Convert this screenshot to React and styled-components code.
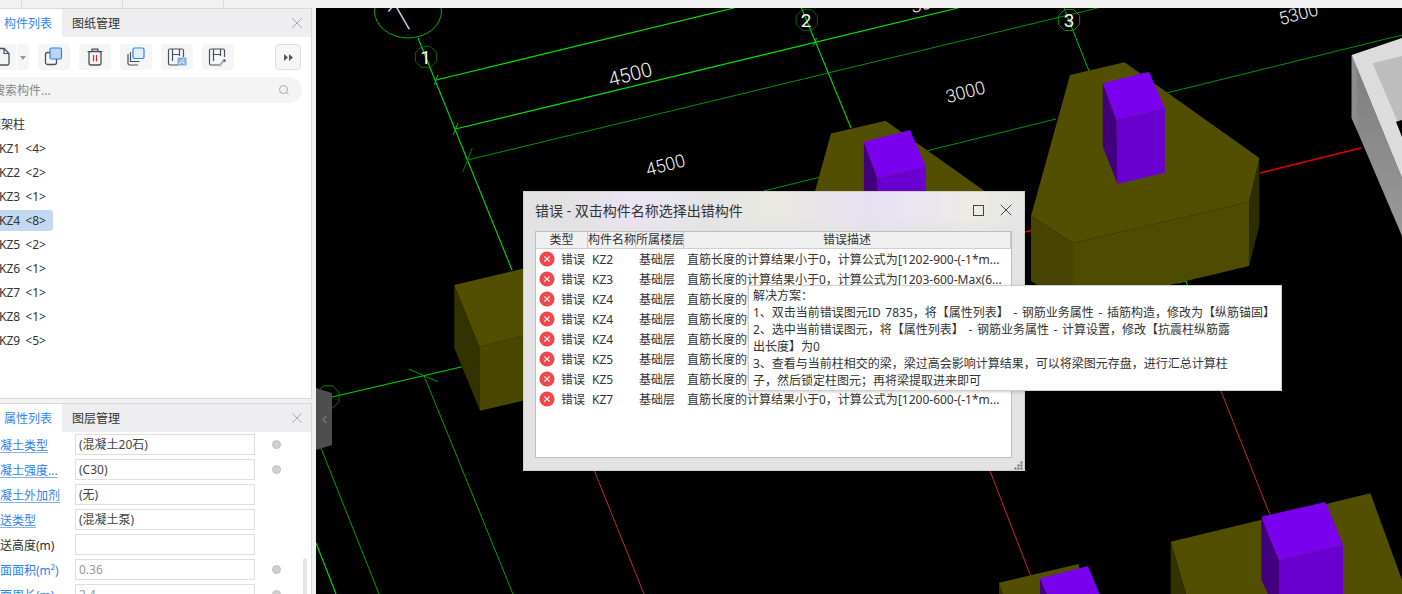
import React from "react";
import styled, { createGlobalStyle } from "styled-components";
import { Search, X, ChevronLeft } from "lucide-react";

const FONT = `"Noto Sans", "Noto Sans CJK SC", "Liberation Sans", sans-serif`;

const members = ["KZ1 <4>", "KZ2 <2>", "KZ3 <1>", "KZ4 <8>", "KZ5 <2>", "KZ6 <1>", "KZ7 <1>", "KZ8 <1>", "KZ9 <5>"];

const props = [
  { label: "凝土类型", value: "(混凝土20石)", blue: true, link: true, dot: true },
  { label: "凝土强度...", value: "(C30)", blue: true, link: true, dot: true },
  { label: "凝土外加剂", value: "(无)", blue: true, link: true },
  { label: "送类型", value: "(混凝土泵)", blue: true, link: true },
  { label: "送高度(m)", value: "" },
  { label: "面面积(m²)", value: "0.36", blue: true, muted: true, dot: true },
  { label: "面周长(m)", value: "2.4", blue: true, muted: true, dot: true },
];

const errors = [
  { name: "KZ2", formula: "[1202-900-(-1*m..." },
  { name: "KZ3", formula: "[1203-600-Max(6..." },
  { name: "KZ4", formula: "[1200-600-(-1*m..." },
  { name: "KZ4", formula: "[1200-600-(-1*m..." },
  { name: "KZ4", formula: "[1200-600-(-1*m..." },
  { name: "KZ5", formula: "[1200-600-(-1*m..." },
  { name: "KZ5", formula: "[1200-600-(-1*m..." },
  { name: "KZ7", formula: "[1200-600-(-1*m..." },
];

const tipLines = [
  "解决方案：",
  "1、双击当前错误图元ID 7835，将【属性列表】 - 钢筋业务属性 - 插筋构造，修改为【纵筋锚固】",
  "2、选中当前错误图元，将【属性列表】 - 钢筋业务属性 - 计算设置，修改【抗震柱纵筋露",
  "出长度】为0",
  "3、查看与当前柱相交的梁，梁过高会影响计算结果，可以将梁图元存盘，进行汇总计算柱",
  "子，然后锁定柱图元；再将梁提取进来即可",
];

const GlobalStyle = createGlobalStyle`
  html, body {
    margin: 0;
    padding: 0;
    overflow: hidden;
    background: #f0f0f0;
    font-family: ${FONT};
  }
`;

function IconDuplicate() {
  return (
    <svg width="20" height="20" viewBox="0 0 20 20" fill="none">
      <rect x="1.5" y="5.5" width="11" height="12" rx="2" stroke="#46505e" strokeWidth="1.3" />
      <rect x="6" y="1" width="11.5" height="11" rx="1.5" fill="#bcd4f4" stroke="#2f84ee" strokeWidth="1.2" />
    </svg>
  );
}

function IconTrash() {
  return (
    <svg width="20" height="20" viewBox="0 0 20 20" fill="none">
      <path d="M2.5 4.5h15M7 4.5V2.2h6v2.3" stroke="#46505e" strokeWidth="1.2" />
      <rect x="4" y="4.5" width="12" height="13.5" rx="2" stroke="#46505e" strokeWidth="1.3" />
      <path d="M8.5 8v6.5M11.5 8v6.5" stroke="#e8262a" strokeWidth="1.2" />
    </svg>
  );
}

function IconStack() {
  return (
    <svg width="20" height="20" viewBox="0 0 20 20" fill="none">
      <path d="M2 7v9.5a1.5 1.5 0 0 0 1.5 1.5H12" stroke="#46505e" strokeWidth="1.2" />
      <path d="M4.5 5v9.5h9" stroke="#46505e" strokeWidth="1.2" />
      <rect x="7" y="1" width="11" height="10.5" rx="1.5" fill="#e3eefb" stroke="#2f84ee" strokeWidth="1.2" />
    </svg>
  );
}

function IconPlan({ variant }) {
  return (
    <svg width="20" height="20" viewBox="0 0 20 20" fill="none">
      <path d="M11 18H3a1.5 1.5 0 0 1-1.5-1.5v-13A1.5 1.5 0 0 1 3 2h12a1.5 1.5 0 0 1 1.5 1.5V10" stroke="#46505e" strokeWidth="1.2" />
      <path d="M5.5 2v12M12.5 2v7M5.5 7.5h7" stroke="#46505e" strokeWidth="1.2" />
      {variant === "image" ? (
        <g>
          <rect x="11" y="11" width="8" height="7" fill="#8db8ee" stroke="#5f9ce6" strokeWidth="0.8" />
          <path d="M12 17l2.6-2.6L17.6 17" stroke="#ffffff" strokeWidth="1" />
          <circle cx="16.5" cy="13" r="0.8" fill="#ffffff" />
        </g>
      ) : (
        <g>
          <path d="M11 19l5-5.5" stroke="#a9afb8" strokeWidth="2" />
          <path d="M15.5 12.5l2 2" stroke="#5f6670" strokeWidth="2" />
        </g>
      )}
    </svg>
  );
}

function IconPage() {
  return (
    <svg width="20" height="20" viewBox="0 0 20 20" fill="none">
      <path d="M4 1.5h8l5 5V16.5a1.5 1.5 0 0 1-1.5 1.5h-11A1.5 1.5 0 0 1 3 16.5V3a1.5 1.5 0 0 1 1-1.5z" stroke="#46505e" strokeWidth="1.3" />
      <path d="M12 1.5v5h5" stroke="#46505e" strokeWidth="1.2" />
    </svg>
  );
}

function ErrorIcon() {
  return (
    <svg width="16" height="16" viewBox="0 0 16 16">
      <circle cx="8" cy="8" r="7.6" fill="#f1474a" />
      <path d="M5.3 5.3l5.4 5.4M10.7 5.3l-5.4 5.4" stroke="#ffffff" strokeWidth="1.2" fill="none" />
    </svg>
  );
}

// 轴号的八边形圈
function hexPoints(cx, cy, r) {
  const pts = [];
  for (let i = 0; i < 8; i++) {
    const a = (Math.PI / 4) * i + Math.PI / 8;
    pts.push(`${(cx + r * Math.cos(a)).toFixed(1)},${(cy + r * Math.sin(a)).toFixed(1)}`);
  }
  return pts.join(" ");
}

const OLIVE = { top: "#525000", front: "#4e4c00", left: "#464400", right: "#2e2d00" };
const PURPLE = { top: "#7a00ee", front: "#6a00d0", left: "#42007f" };

function Footing({ dx = 0, dy = 0 }) {
  return (
    <g transform={`translate(${dx} ${dy})`}>
      <polygon points="1031,216 1073,243 1073,308 1031,281" fill={OLIVE.left} />
      <polygon points="1073,243 1249,202 1249,266 1073,308" fill={OLIVE.front} />
      <polygon points="1259.4,158 1249,202 1249,266 1259.4,226" fill={OLIVE.right} />
      <polygon points="1070,75 1124.5,62.3 1259.4,158 1249,202 1073,243 1031,216" fill={OLIVE.top} />
      <polygon points="1102.8,83.3 1116.5,120 1117.6,184 1102.8,146.7" fill={PURPLE.left} />
      <polygon points="1116.5,120 1164.8,108.3 1164.8,172.7 1117.6,184" fill={PURPLE.front} />
      <polygon points="1102.8,83.3 1149,71.7 1164.8,108.3 1116.5,120" fill={PURPLE.top} />
    </g>
  );
}

function Tick({ x, y, len = 8, stroke }) {
  return <line x1={x - len * 0.4} y1={y + len} x2={x + len * 0.4} y2={y - len} stroke={stroke} strokeWidth="0.9" />;
}

function Drawing() {
  return (
    <DrawingSvg viewBox="316 8 1086 586">
      <g fill="none" strokeWidth="1">
        <line x1="436" y1="80" x2="734" y2="8" stroke="#00e800" strokeWidth="1.2" />
        <line x1="455.5" y1="129" x2="958" y2="8" stroke="#00e800" strokeWidth="1.2" />
        <line x1="467.5" y1="160" x2="1097.6" y2="8" stroke="#009400" />
        <line x1="763.7" y1="191" x2="1056" y2="119" stroke="#009400" />
        <line x1="1166.5" y1="93" x2="1402" y2="35" stroke="#009400" />
        <line x1="418" y1="38" x2="512" y2="270" stroke="#00d800" strokeWidth="1.15" />
        <line x1="801.5" y1="8" x2="851" y2="128" stroke="#00d800" strokeWidth="1.15" />
        <line x1="1064" y1="8" x2="1089" y2="71" stroke="#00c000" />
        <line x1="332" y1="397" x2="462" y2="366.7" stroke="#00d000" strokeWidth="1.15" />
        <line x1="423.7" y1="375" x2="513" y2="594" stroke="#00a000" />
        <line x1="321" y1="448" x2="379" y2="594" stroke="#00a000" />
        <line x1="316" y1="543" x2="336" y2="594" stroke="#00e000" strokeWidth="1.15" />
        <line x1="1177" y1="283" x2="1186" y2="281" stroke="#00d000" />
        <line x1="1186" y1="281" x2="1189" y2="290" stroke="#00d000" />
        <line x1="408.7" y1="369" x2="437.7" y2="381.7" stroke="#00a000" />
        <line x1="1260" y1="173" x2="1361" y2="148" stroke="#e80000" strokeWidth="1.3" />
        <line x1="1025" y1="232" x2="1034" y2="230" stroke="#e80000" strokeWidth="1.3" />
        <line x1="594" y1="470" x2="644" y2="594" stroke="#d83030" strokeWidth="0.9" />
        <line x1="989.6" y1="470" x2="1030.7" y2="576" stroke="#d83030" strokeWidth="0.9" />
        <line x1="1221" y1="391" x2="1270" y2="515" stroke="#d83030" strokeWidth="0.9" />
      </g>

      <Tick x={436} y={80} len={5} stroke="#00d000" />
      <Tick x={455.5} y={129} len={6} stroke="#00d000" />
      <Tick x={467.5} y={160} len={12} stroke="#008c00" />
      <Tick x={815} y={42} len={4} stroke="#00d000" />

      <ellipse cx="408" cy="11" rx="33.5" ry="27" fill="none" stroke="#00b000" strokeWidth="1" />
      <polygon points={hexPoints(426, 57, 11.5)} fill="none" stroke="#007000" strokeWidth="0.9" />
      <polygon points={hexPoints(806.7, 20, 11.5)} fill="none" stroke="#007000" strokeWidth="0.9" />
      <polygon points={hexPoints(1069, 20, 11.5)} fill="none" stroke="#008c00" strokeWidth="1" />
      <polygon points={hexPoints(328, 397, 12)} fill="none" stroke="#009000" strokeWidth="0.9" />

      <CadText x="408" y="30" size={42} weight={100} transform="rotate(-30 408 30)">1</CadText>
      <CadText x="425.5" y="64" size={19}>1</CadText>
      <CadText x="806" y="27" size={19}>2</CadText>
      <CadText x="1069" y="27" size={19}>3</CadText>
      <CadText x="632" y="81" size={20} weight={300} transform="rotate(-15 632 81)">4500</CadText>
      <CadText x="667" y="171" size={18} weight={300} transform="rotate(-15 667 171)">4500</CadText>
      <CadText x="967" y="98" size={18} weight={300} transform="rotate(-15 967 98)">3000</CadText>
      <CadText x="1300" y="20" size={18} weight={300} transform="rotate(-15 1300 20)">5300</CadText>
      <CadText x="932" y="8" size={18} weight={300} transform="rotate(-15 932 8)">3000</CadText>

      <Footing />
      <Footing dx={-239} dy={58.4} />

      {/* 左侧基础 */}
      <polygon points="454.3,285 479.3,346.7 480,410.7 454.3,348" fill="#333300" />
      <polygon points="479.3,346.7 530,334 530,399 480,410.7" fill="#4a4800" />
      <polygon points="454.3,285 530,267 530,334 479.3,346.7" fill="#525000" />

      {/* 下方基础 */}
      <polygon points="999,582.7 1078.5,564 1086,594 1003,594 999,594" fill="#525000" />
      <polygon points="999,582.7 1003,594 999,594" fill="#333300" />
      <polygon points="1040,578.3 1047,594 1040,594" fill={PURPLE.left} />
      <polygon points="1040,578.3 1088,566 1099,592.7 1099,594 1047,594" fill={PURPLE.top} />

      <polygon points="1170.7,541.7 1370.4,493.3 1402,580 1402,594 1186,594" fill="#525000" />
      <polygon points="1170.7,541.7 1186,594 1170.7,594" fill="#333300" />
      <polygon points="1261.3,516.7 1279,560 1279,594 1268,594 1261.3,580" fill={PURPLE.left} />
      <polygon points="1279,560 1343,545 1343,594 1279,594" fill={PURPLE.front} />
      <polygon points="1261.3,516.7 1325.4,502 1343,545 1279,560" fill={PURPLE.top} />

      {/* 灰色构件 */}
      <defs>
        <linearGradient id="sideGrey" x1="0" y1="0" x2="0" y2="1">
          <stop offset="0" stopColor="#7c7c7c" />
          <stop offset="1" stopColor="#9a9a9a" />
        </linearGradient>
      </defs>
      <polygon points="1351.7,55 1402,178 1402,236 1351.7,118" fill="url(#sideGrey)" />
      <polygon points="1351.7,55 1357,68 1357,130 1351.7,118" fill="#8c8c8c" />
      <polygon points="1351.7,55 1402,38 1402,178" fill="#dcdcdc" />
      <polygon points="1372.7,63.3 1402,56 1402,132" fill="#bdbdbd" />
      <polygon points="1396,121.7 1402,120 1402,137" fill="#000000" />
    </DrawingSvg>
  );
}

export default function App() {
  return (
    <Page>
      <GlobalStyle />
      <TopStrip>
        <StripCell />
        <StripCell />
        <StripCell />
      </TopStrip>
      <Main>
        <Side>
          <ListPanel>
            <Tabs>
              <Tab $active>构件列表</Tab>
              <Tab>图纸管理</Tab>
              <CloseBtn><X size={18} strokeWidth={1.3} /></CloseBtn>
            </Tabs>
            <Toolbar>
              <SplitBtn>
                <SplitMain><IconPage /></SplitMain>
                <SplitArrow />
              </SplitBtn>
              <ToolBtn><IconDuplicate /></ToolBtn>
              <ToolBtn><IconTrash /></ToolBtn>
              <ToolBtn><IconStack /></ToolBtn>
              <ToolBtn><IconPlan variant="image" /></ToolBtn>
              <ToolBtn><IconPlan variant="picker" /></ToolBtn>
              <MoreBtn>
                <svg width="9" height="7" viewBox="0 0 9 7">
                  <path d="M0 0l4 3.5L0 7zM5 0l4 3.5L5 7z" fill="#555b66" />
                </svg>
              </MoreBtn>
            </Toolbar>
            <SearchBar>
              <SearchText>搜索构件...</SearchText>
              <Search size={12} color="#a8a8a8" strokeWidth={2} />
            </SearchBar>
            <Tree>
              <TreeGroup>框架柱</TreeGroup>
              {members.map((m) => (
                <TreeRow key={m} $selected={m.startsWith("KZ4")}>{m}</TreeRow>
              ))}
            </Tree>
          </ListPanel>
          <PropPanel>
            <Tabs>
              <Tab $active>属性列表</Tab>
              <Tab>图层管理</Tab>
              <CloseBtn><X size={18} strokeWidth={1.3} /></CloseBtn>
            </Tabs>
            <PropList>
              {props.map((p) => (
                <PropRow key={p.label}>
                  <PropLabel $blue={p.blue} $link={p.link}>{p.label}</PropLabel>
                  <PropValue $muted={p.muted}>{p.value}</PropValue>
                  {p.dot && <PropDot />}
                </PropRow>
              ))}
            </PropList>
            <PropScroll />
          </PropPanel>
        </Side>
        <Canvas>
          <Drawing />
          <Collapse><ChevronLeft size={13} color="#a5a5a5" strokeWidth={1.5} /></Collapse>
          <Dialog>
            <DialogTitle>
              <span>错误 - 双击构件名称选择出错构件</span>
              <TitleBtns>
                <MaxBox />
                <X size={20} color="#444" strokeWidth={1.2} />
              </TitleBtns>
            </DialogTitle>
            <Table>
              <HeadRow>
                <HeadCell>类型</HeadCell>
                <HeadCell>构件名称</HeadCell>
                <HeadCell>所属楼层</HeadCell>
                <HeadCell>错误描述</HeadCell>
              </HeadRow>
              {errors.map((e, i) => (
                <ErrorRow key={i}>
                  <TypeCell><ErrorIcon /><span>错误</span></TypeCell>
                  <NameCell>{e.name}</NameCell>
                  <FloorCell>基础层</FloorCell>
                  <DescCell>直筋长度的计算结果小于0，计算公式为{e.formula}</DescCell>
                </ErrorRow>
              ))}
            </Table>
            <Grip>
              <svg width="9" height="9" viewBox="0 0 9 9" fill="#6d6d6d">
                <rect x="6.5" y="0.5" width="2" height="2" />
                <rect x="3.5" y="3.5" width="2" height="2" />
                <rect x="6.5" y="3.5" width="2" height="2" />
                <rect x="0.5" y="6.5" width="2" height="2" />
                <rect x="3.5" y="6.5" width="2" height="2" />
                <rect x="6.5" y="6.5" width="2" height="2" />
              </svg>
            </Grip>
          </Dialog>
          <Tooltip>
            {tipLines.map((t) => (
              <TipLine key={t}>{t}</TipLine>
            ))}
          </Tooltip>
        </Canvas>
      </Main>
    </Page>
  );
}

const Page = styled.div`
  width: 1402px;
  height: 594px;
  display: flex;
  flex-direction: column;
  overflow: hidden;
`;

const TopStrip = styled.div`
  height: 8px;
  flex: none;
  display: flex;
  padding-left: 21px;
  background: #f1f1f1;
`;

const StripCell = styled.div`
  width: 100px;
  border-left: 1px solid #dcdcdc;
`;

const Main = styled.div`
  flex: 1;
  min-height: 0;
  display: flex;
`;

const Side = styled.div`
  width: 316px;
  flex: none;
  display: flex;
  flex-direction: column;
  gap: 4px;
  padding-right: 4px;
  box-sizing: border-box;
  background: #f1f1f1;
`;

const ListPanel = styled.section`
  height: 391px;
  flex: none;
  box-sizing: border-box;
  background: #fff;
  border: 1px solid #d9d9d9;
  border-left: none;
  overflow: hidden;
`;

const PropPanel = styled.section`
  position: relative;
  flex: 1;
  min-height: 0;
  box-sizing: border-box;
  background: #fff;
  border: 1px solid #d9d9d9;
  border-left: none;
  border-bottom: none;
  overflow: hidden;
`;

const Tabs = styled.div`
  height: 28px;
  display: flex;
  align-items: stretch;
  background: #eeeef0;
`;

const Tab = styled.div`
  width: ${(p) => (p.$active ? "58px" : "62px")};
  padding-left: ${(p) => (p.$active ? "4px" : "10px")};
  display: flex;
  align-items: center;
  font-size: 12px;
  white-space: nowrap;
  color: ${(p) => (p.$active ? "#2f86f6" : "#333")};
  background: ${(p) => (p.$active ? "#fff" : "transparent")};
`;

const CloseBtn = styled.div`
  margin-left: auto;
  width: 28px;
  display: flex;
  align-items: center;
  justify-content: center;
  color: #a8a8a8;
`;

const Toolbar = styled.div`
  height: 26px;
  margin: 7px 0 7px -13px;
  display: flex;
  align-items: stretch;
  gap: 9px;
`;

const ToolBtn = styled.div`
  width: 32px;
  display: flex;
  align-items: center;
  justify-content: center;
  border-radius: 4px;
  background: #f5f5f5;
`;

const SplitBtn = styled.div`
  width: 42px;
  display: flex;
  gap: 1px;
  border-radius: 4px;
  overflow: hidden;
`;

const SplitMain = styled.div`
  flex: 1;
  display: flex;
  align-items: center;
  justify-content: center;
  background: #f5f5f5;
`;

const SplitArrow = styled.div`
  width: 12px;
  flex: none;
  background: #f5f5f5;
  display: flex;
  align-items: center;
  justify-content: center;
  &::after {
    content: "";
    border: 3px solid transparent;
    border-top: 4px solid #999;
    margin-top: 4px;
  }
`;

const MoreBtn = styled(ToolBtn)`
  width: 26px;
  box-sizing: border-box;
  margin-left: 32px;
  background: #f7f7f7;
  border: 1px solid #dedede;
`;

const SearchBar = styled.div`
  height: 26px;
  margin: 0 9px 0 -12px;
  padding: 0 12px 0 5px;
  display: flex;
  align-items: center;
  justify-content: space-between;
  border-radius: 13px;
  background: #f4f4f5;
`;

const SearchText = styled.span`
  font-size: 12px;
  color: #888;
`;

const Tree = styled.div`
  margin-top: 10px;
  font-size: 12px;
  color: #333;
`;

const TreeGroup = styled.div`
  height: 25px;
  line-height: 24px;
  margin-left: -11px;
`;

const TreeRow = styled.div`
  height: 21px;
  margin-bottom: 3px;
  width: 53px;
  text-indent: -1px;
  line-height: 21px;
  white-space: nowrap;
  word-spacing: 2px;
  border-radius: 0 3px 3px 0;
  background: ${(p) => (p.$selected ? "#c3d9f2" : "transparent")};
`;

const PropList = styled.div`
  padding-top: 2px;
  display: flex;
  flex-direction: column;
  gap: 4px;
`;

const PropRow = styled.div`
  height: 21px;
  flex: none;
  display: flex;
  align-items: center;
  font-size: 12px;
`;

const PropLabel = styled.div`
  width: 75px;
  white-space: nowrap;
  color: ${(p) => (p.$blue ? "#2f7ff0" : "#333")};
  text-decoration: ${(p) => (p.$link ? "underline" : "none")};
  text-decoration-color: #86b2f4;
  text-underline-offset: 2px;
`;

const PropValue = styled.div`
  width: 180px;
  height: 21px;
  line-height: 19px;
  box-sizing: border-box;
  padding-left: 3px;
  border: 1px solid #dedede;
  color: ${(p) => (p.$muted ? "#999" : "#444")};
`;

const PropDot = styled.span`
  width: 7px;
  height: 7px;
  margin-left: 17px;
  border-radius: 50%;
  background: #d0d0d0;
  border: 1px solid #c0c0c0;
`;

const PropScroll = styled.div`
  position: absolute;
  right: 4px;
  bottom: 0;
  width: 4px;
  height: 36px;
  background: #e6e6e6;
  border-radius: 2px 2px 0 0;
`;

const Canvas = styled.div`
  position: relative;
  flex: 1;
  background: #000;
  overflow: hidden;
`;

const DrawingSvg = styled.svg`
  display: block;
  width: 1086px;
  height: 586px;
`;

const CadText = styled.text.attrs({ textAnchor: "middle" })`
  font-family: Roboto, "Liberation Sans", sans-serif;
  font-size: ${(p) => p.size}px;
  font-weight: ${(p) => p.weight || 400};
  fill: #f4f4f4;
`;

const Collapse = styled.div`
  position: absolute;
  left: 0;
  top: 380px;
  width: 16px;
  height: 62px;
  display: flex;
  align-items: center;
  justify-content: center;
  background: #4e4e4e;
  clip-path: polygon(0 0, 100% 8%, 100% 92%, 0 100%);
`;

const Dialog = styled.div`
  position: absolute;
  left: 207px;
  top: 183px;
  width: 502px;
  height: 280px;
  box-sizing: border-box;
  padding: 0 12px 0 11px;
  display: flex;
  flex-direction: column;
  border: 1px solid #cfcfcf;
  background:
    linear-gradient(180deg, rgba(227, 227, 227, 0) 0, rgba(227, 227, 227, 0) 25px, #e3e3e3 46px),
    linear-gradient(90deg, #e2e2e2 0, #e4e2e4 12%, #ece2f4 20%, #e8e6ee 30%, #e3e3e3 36%, #e9e9e2 50%, #e6e0f0 70%, #e9e4f2 76%, #ecece4 90%, #e5e5e5 100%);
`;

const DialogTitle = styled.div`
  height: 36px;
  margin-bottom: 3px;
  flex: none;
  display: flex;
  align-items: center;
  justify-content: space-between;
  font-size: 14px;
  color: #333;
`;

const TitleBtns = styled.div`
  display: flex;
  align-items: center;
  gap: 12px;
  margin-right: -4px;
`;

const MaxBox = styled.div`
  width: 11px;
  height: 11px;
  box-sizing: border-box;
  border: 1px solid #444;
`;

const Table = styled.div`
  flex: none;
  width: 477px;
  height: 227px;
  box-sizing: border-box;
  background: #fff;
  border: 1px solid #bdbdbd;
  font-size: 12px;
  color: #333;
`;

const HeadRow = styled.div`
  height: 17px;
  box-sizing: border-box;
  display: grid;
  grid-template-columns: 52px 48px 48px 1fr;
  background: #f0f0f0;
  border-bottom: 1px solid #cfcfcf;
`;

const HeadCell = styled.div`
  text-align: center;
  line-height: 16px;
  white-space: nowrap;
  border-right: 1px solid #c8c8c8;
`;

const ErrorRow = styled.div`
  height: 20px;
  display: grid;
  grid-template-columns: 52px 48px 48px 1fr;
  align-items: center;
  white-space: nowrap;
`;

const TypeCell = styled.div`
  display: flex;
  align-items: center;
  gap: 6px;
  padding-left: 3px;
`;

const NameCell = styled.div`
  padding-left: 4px;
`;

const FloorCell = styled.div`
  padding-left: 3px;
`;

const DescCell = styled.div`
  padding-left: 3px;
  overflow: hidden;
`;

const Grip = styled.div`
  position: absolute;
  right: 1px;
  bottom: 0;
  line-height: 0;
`;

const Tooltip = styled.div`
  position: absolute;
  left: 432px;
  top: 277px;
  width: 534px;
  height: 106px;
  box-sizing: border-box;
  padding: 1px 4px;
  background: #fff;
  border: 1px solid #cfcfcf;
  box-shadow: 0 1px 3px rgba(0, 0, 0, 0.2);
  font-size: 12px;
  color: #333;
`;

const TipLine = styled.div`
  height: 17px;
  line-height: 17px;
  white-space: nowrap;
  word-spacing: 1.5px;
`;
